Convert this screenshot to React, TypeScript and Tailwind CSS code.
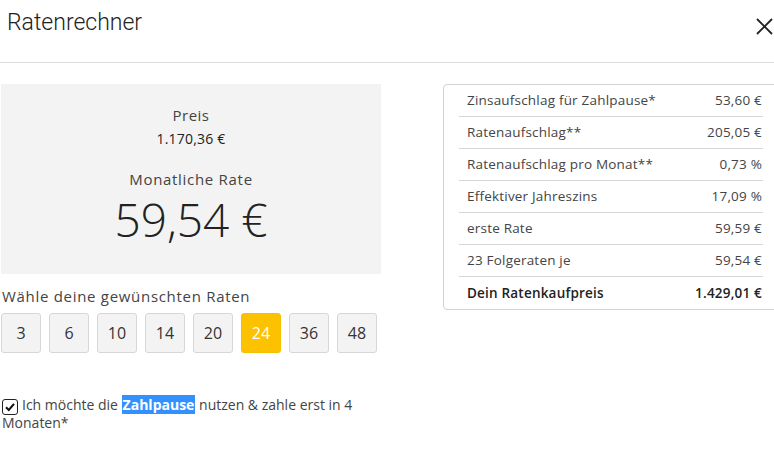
import React from "react";

const rows: { label: string; value: string; bold?: boolean }[] = [
  { label: "Zinsaufschlag für Zahlpause*", value: "53,60 €" },
  { label: "Ratenaufschlag**", value: "205,05 €" },
  { label: "Ratenaufschlag pro Monat**", value: "0,73 %" },
  { label: "Effektiver Jahreszins", value: "17,09 %" },
  { label: "erste Rate", value: "59,59 €" },
  { label: "23 Folgeraten je", value: "59,54 €" },
  { label: "Dein Ratenkaufpreis", value: "1.429,01 €", bold: true },
];

const terms = [3, 6, 10, 14, 20, 24, 36, 48];

export default function App() {
  return (
    <div
      className="relative w-[774px] h-[468px] overflow-hidden bg-white text-[#333]"
      style={{ fontFamily: "'Open Sans', 'DejaVu Sans', sans-serif" }}
    >
      {/* Dialog header */}
      <div className="flex h-[63px] items-start justify-between border-b border-[#dcdcdc]">
        <h1
          className="pl-[7px] pt-[8px] text-[23px] font-light leading-[30px] text-[#222]"
          style={{ fontFamily: "Roboto, sans-serif" }}
        >
          Ratenrechner
        </h1>
        <button className="mr-[1px] mt-[18px] text-[#222]" aria-label="Schließen">
          <svg width="17" height="17" viewBox="0 0 17 17" fill="none" stroke="currentColor" strokeWidth="1.8">
            <path d="M1 1 L16 16 M16 1 L1 16" />
          </svg>
        </button>
      </div>

      <div className="flex">
        {/* Left column */}
        <div className="w-[381px] shrink-0 pl-[1px] pt-[21px]">
          <div className="flex h-[190px] flex-col items-center bg-[#f3f3f3] pt-[21px]">
            <div className="text-[15px] leading-[20px] tracking-[0.5px] text-[#444]">Preis</div>
            <div className="mt-[4px] text-[14px] leading-[20px] tracking-[0.2px] text-[#222]">1.170,36 €</div>
            <div className="mt-[20px] text-[15px] leading-[20px] tracking-[0.7px] text-[#444]">Monatliche Rate</div>
            <div className="mt-[2px] text-[46px] font-light leading-[56px] text-[#222]">59,54 €</div>
          </div>

          <div className="mt-[12px] pl-[1px] text-[15px] leading-[20px] tracking-[0.7px] text-[#444]">
            Wähle deine gewünschten Raten
          </div>
          <div className="mt-[7px] flex gap-[8px]">
            {terms.map((t) => (
              <div
                key={t}
                className={
                  t === 24
                    ? "flex h-[40px] w-[40px] items-center justify-center rounded-[3px] border border-[#f5c000] bg-[#fcc200] text-[16px] text-white"
                    : "flex h-[40px] w-[40px] items-center justify-center rounded-[3px] border border-[#d6d6d6] bg-[#f3f3f3] text-[16px] text-[#333]"
                }
              >
                {t}
              </div>
            ))}
          </div>

          <div className="mt-[43px] w-[362px] pl-[1px] text-[14px] leading-[18px] text-[#444]">
            <span className="mr-[4px] inline-flex h-[16px] w-[16px] translate-y-[3px] items-center justify-center rounded-[3px] border border-[#222] bg-white align-baseline">
              <svg width="12" height="12" viewBox="0 0 12 12" fill="none" stroke="#111" strokeWidth="2">
                <path d="M2 6.2 L4.8 9 L10 2.8" />
              </svg>
            </span>
            Ich möchte die{" "}
            <span className="bg-[#3390ff] px-[1px] font-bold text-white">Zahlpause</span> nutzen &amp; zahle erst in 4
            Monaten*
          </div>
        </div>

        {/* Cost breakdown */}
        <div className="ml-[62px] mt-[21px] w-[340px] shrink-0">
          <div className="rounded-[4px] border border-[#d2d2d2] pl-[15px] pr-[19px]">
            {rows.map((r, i) => (
              <div
                key={r.label}
                className={
                  "flex h-[32px] items-center justify-between pl-[8px] pr-[1px] text-[13.5px] tracking-[0.2px] " +
                  (i < rows.length - 1 ? "border-b border-[#d6d6d6] " : "") +
                  (r.bold ? "font-semibold text-[#222]" : "text-[#444]")
                }
              >
                <span>{r.label}</span>
                <span>{r.value}</span>
              </div>
            ))}
          </div>
        </div>
      </div>
    </div>
  );
}
